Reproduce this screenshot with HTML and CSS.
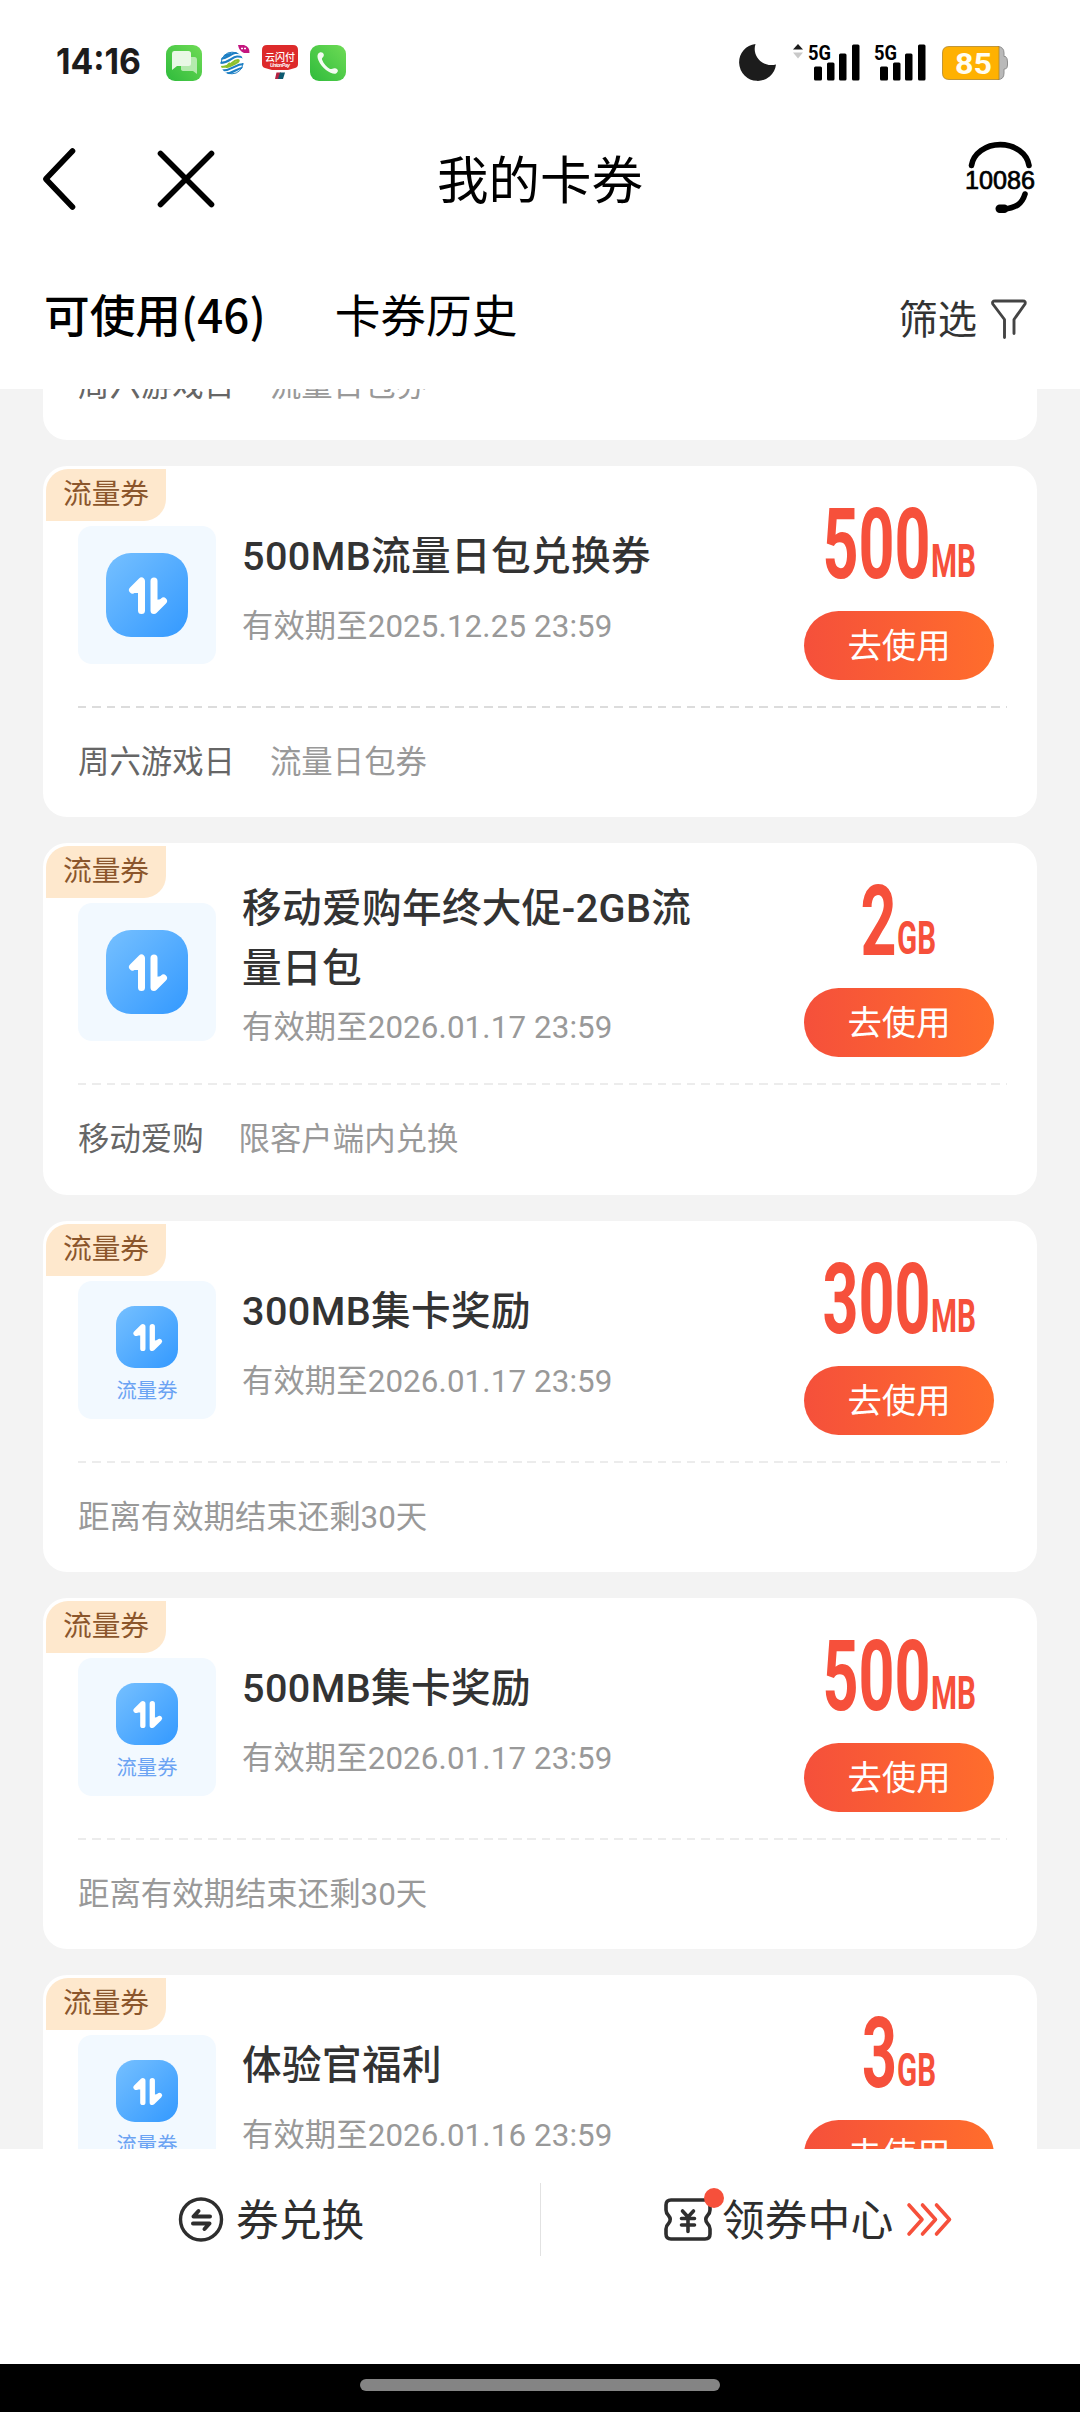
FILE: index.html
```html
<!DOCTYPE html>
<html lang="zh-CN">
<head>
<meta charset="utf-8">
<title>我的卡券</title>
<link rel="stylesheet" href="styles.css">
</head>
<body>
<svg class="defs" width="0" height="0">
  <defs>
    <linearGradient id="blue" x1="0" y1="0" x2="1" y2="1"><stop offset="0" stop-color="#76c0ff"/><stop offset="1" stop-color="#3399ff"/></linearGradient>
    <linearGradient id="green" x1="0" y1="1" x2="1" y2="0"><stop offset="0" stop-color="#2fbb3c"/><stop offset="1" stop-color="#6edb55"/></linearGradient>
    <clipPath id="globe"><circle cx="12" cy="18" r="11.500"/></clipPath>
    <symbol id="flow" viewBox="0 0 82 84">
      <rect width="82" height="84" rx="25" fill="url(#blue)"/>
      <path d="M26.500 37 35.500 28V57.500M48 28V57.500L57.500 48" fill="none" stroke="#fff" stroke-width="7" stroke-linecap="round" stroke-linejoin="round"/>
      <path d="M26.500 40 35.500 28V40ZM48 57 57.500 46 48 47Z" fill="#fff"/>
    </symbol>
    <symbol id="signal" viewBox="0 0 54 38" overflow="visible">
      <text x="0" y="15.500" class="net" textLength="23" lengthAdjust="spacingAndGlyphs">5G</text>
      <rect x="6" y="22.500" width="8" height="14" rx="1.500"/><rect x="19" y="18.500" width="7.500" height="18" rx="1.500"/><rect x="31" y="9.500" width="7.500" height="27" rx="1.500"/><rect x="44" y="0.500" width="7.500" height="36" rx="1.500"/>
    </symbol>
  </defs>
</svg>
<div class="screen">
  <div class="status">
    <div class="status-left">
      <svg width="86" height="38" viewBox="0 0 86 38"><text x="0" y="30" class="clock" textLength="85" lengthAdjust="spacingAndGlyphs">14:16</text></svg>
      <svg class="s-msg" width="36" height="36" viewBox="0 0 36 36"><rect width="36" height="36" rx="9" fill="url(#green)"/><path d="M15 12H28.500Q31 12 31 15V29L27 26H18Q15 26 15 24Z" fill="#b4eaae"/><path d="M8 6H22.500Q25 6 25 8.500V18.500Q25 21 22.500 21H11L6 25V8.500Q6 6 8 6Z" fill="#e9f8e6"/></svg>
      <svg class="s-cm" width="32" height="36" viewBox="0 0 32 36"><g clip-path="url(#globe)" fill="none" stroke-width="2.200"><path d="M-1 14C7 14 10 9 15 8 19 7.500 21 8 25 9M-1 18C10 18 11 12 17 11.500 20 11.300 22 12 25 13" stroke="#1d7fc4"/><path d="M-1 22C13 22 11 15.500 18 15 19 15 19 17 16 18 12 20 10 21.500 7 22 5 22 8 20.500 10 18" stroke="#8cc02c"/><path d="M1 25.500C13 26 14 19 24 19M4 29C14 29 16 23 24 22.500M11 9C8 9 6 10.500 4 11" stroke="#1d7fc4"/></g><circle cx="12" cy="18" r="10.800" fill="none" stroke="#1d7fc4" stroke-width="1" stroke-dasharray="22 12"/><path d="M18 0H24Q30 2 29.500 8H24Q19 6 18 0Z" fill="#c4157f"/><path d="M21 3.500H27" stroke="#fff" stroke-width="1.500" stroke-dasharray="2 1"/></svg>
      <svg class="s-up" width="36" height="36" viewBox="0 0 36 36"><path d="M5 0H31Q36 0 36 5V19Q36 22 33 23L26 25H10L3 23Q0 22 0 19V5Q0 0 5 0Z" fill="#dd2a2b"/><text x="3" y="15.500" class="up-cn" textLength="30">云闪付</text><text x="8" y="22" class="up-en" textLength="20">UnionPay</text><path d="M14.500 27.500H19L17 34H13Z" fill="#b52342"/><path d="M18 27.500H23L21 34H16Z" fill="#0c5a70"/></svg>
      <svg class="s-tel" width="36" height="36" viewBox="0 0 36 36"><rect width="36" height="36" rx="9" fill="url(#green)"/><path d="M8 9C9.500 6.500 13 6.500 13.800 9.500 14.300 12 11.500 12.500 12 14.500 13.500 18.500 16.500 22 20 24 22 24.500 23 22.500 26 23.500 29 25 28 27 26 28.500 22 30 12 24 8.500 15.500 7.500 13 7 11 8 9Z" fill="#f4fbf2"/></svg>
    </div>
    <div class="status-right">
      <svg width="38" height="38" viewBox="0 0 38 38"><path d="M16.500 0A18.500 18.500 0 1 0 37 20.500C24 24 12.500 12 16.500 0Z" fill="#1c1c1c"/></svg>
      <svg class="s-updn" width="10" height="38" viewBox="0 0 10 38"><path d="M0 5.500 5 0 10 5.500Z" fill="#1c1c1c"/><path d="M0 8.500H10L5 14.500Z" fill="#c9c9c9"/></svg>
      <svg class="s-sig1" width="54" height="38"><use href="#signal"/></svg>
      <svg class="s-sig2" width="54" height="38"><use href="#signal"/></svg>
      <svg class="s-bat" width="67" height="38" viewBox="0 0 67 38"><path d="M56 2.500Q62 3 62 9V12.500H63.500Q65.500 14 65.500 18V21Q65.500 24 63.500 25H62V29Q62 35.500 56 35.500Z" fill="#b9b9b9" stroke="#8d8d8d"/><path d="M57 2.500H7Q.500 2.500 .500 9V29Q.500 35.500 7 35.500H57Z" fill="#ffb101" stroke="#b08528" stroke-width=".8"/><text x="13" y="30" class="bat" textLength="37" lengthAdjust="spacingAndGlyphs">85</text></svg>
    </div>
  </div>

  <header class="nav">
    <svg width="34" height="62" viewBox="0 0 34 62"><path d="M29.500 3 2.800 31 29.500 59" class="ink"/></svg>
    <svg class="close" width="56" height="56" viewBox="0 0 56 56"><path d="M2.500 2.500 53.500 53.500M53.500 2.500 2.500 53.500" class="ink"/></svg>
    <h1>我的卡券</h1>
    <svg class="service" width="72" height="74" viewBox="0 0 72 74"><path d="M7.500 23.500A29 24 0 0 1 65 23.500" class="ink"/><path d="M61 52C58 62 52 66 40 67" class="ink"/><rect x="31.500" y="62.500" width="13" height="8.500" rx="4.200"/><text x="1" y="46.500" class="hotline" textLength="70" lengthAdjust="spacingAndGlyphs">10086</text></svg>
  </header>

  <nav class="tabs">
    <span class="tab on">可使用(46)</span>
    <span class="tab">卡券历史</span>
    <span class="filter">筛选<svg width="36" height="40" viewBox="0 0 36 40"><path d="M13.500 38.500V20.500L1.800 5Q.800 2 4 2H32Q35 2 34 5L23 20.500V34.500" fill="none" stroke="#444" stroke-width="2.900" stroke-linecap="round" stroke-linejoin="round"/></svg></span>
  </nav>

  <main class="scroll">
    <div class="list">
      <article class="card">
        <div class="card-main"></div>
        <div class="card-foot"><span class="src">周六游戏日</span><span>流量日包券</span></div>
      </article>

      <article class="card">
        <span class="tag">流量券</span>
        <div class="card-main">
          <div class="thumb"><svg width="82" height="84"><use href="#flow"/></svg></div>
          <div class="info"><h2>500MB流量日包兑换券</h2><p>有效期至2025.12.25 23:59</p></div>
          <div class="action">
            <svg class="amount" width="190" height="80"><text x="18.500" y="74.500" class="num" textLength="108" lengthAdjust="spacingAndGlyphs">500</text><text x="127" y="74" class="unit" textLength="45" lengthAdjust="spacingAndGlyphs">MB</text></svg>
            <button>去使用</button>
          </div>
        </div>
        <div class="card-foot strong"><span class="src">周六游戏日</span><span>流量日包券</span></div>
      </article>

      <article class="card">
        <span class="tag">流量券</span>
        <div class="card-main">
          <div class="thumb"><svg width="82" height="84"><use href="#flow"/></svg></div>
          <div class="info two"><h2>移动爱购年终大促-2GB流量日包</h2><p>有效期至2026.01.17 23:59</p></div>
          <div class="action">
            <svg class="amount" width="190" height="80"><text x="56.500" y="74.500" class="num" textLength="36" lengthAdjust="spacingAndGlyphs">2</text><text x="93" y="74" class="unit" textLength="39" lengthAdjust="spacingAndGlyphs">GB</text></svg>
            <button>去使用</button>
          </div>
        </div>
        <div class="card-foot"><span class="src">移动爱购</span><span>限客户端内兑换</span></div>
      </article>

      <article class="card">
        <span class="tag">流量券</span>
        <div class="card-main">
          <div class="thumb named"><svg width="62" height="62" viewBox="0 0 82 84" preserveAspectRatio="none"><use href="#flow"/></svg><small>流量券</small></div>
          <div class="info"><h2>300MB集卡奖励</h2><p>有效期至2026.01.17 23:59</p></div>
          <div class="action">
            <svg class="amount" width="190" height="80"><text x="18.500" y="74.500" class="num" textLength="108" lengthAdjust="spacingAndGlyphs">300</text><text x="127" y="74" class="unit" textLength="45" lengthAdjust="spacingAndGlyphs">MB</text></svg>
            <button>去使用</button>
          </div>
        </div>
        <div class="card-foot"><span>距离有效期结束还剩30天</span></div>
      </article>

      <article class="card">
        <span class="tag">流量券</span>
        <div class="card-main">
          <div class="thumb named"><svg width="62" height="62" viewBox="0 0 82 84" preserveAspectRatio="none"><use href="#flow"/></svg><small>流量券</small></div>
          <div class="info"><h2>500MB集卡奖励</h2><p>有效期至2026.01.17 23:59</p></div>
          <div class="action">
            <svg class="amount" width="190" height="80"><text x="18.500" y="74.500" class="num" textLength="108" lengthAdjust="spacingAndGlyphs">500</text><text x="127" y="74" class="unit" textLength="45" lengthAdjust="spacingAndGlyphs">MB</text></svg>
            <button>去使用</button>
          </div>
        </div>
        <div class="card-foot"><span>距离有效期结束还剩30天</span></div>
      </article>

      <article class="card">
        <span class="tag">流量券</span>
        <div class="card-main">
          <div class="thumb named"><svg width="62" height="62" viewBox="0 0 82 84" preserveAspectRatio="none"><use href="#flow"/></svg><small>流量券</small></div>
          <div class="info"><h2>体验官福利</h2><p>有效期至2026.01.16 23:59</p></div>
          <div class="action">
            <svg class="amount" width="190" height="80"><text x="58" y="74.500" class="num" textLength="35" lengthAdjust="spacingAndGlyphs">3</text><text x="93" y="74" class="unit" textLength="39" lengthAdjust="spacingAndGlyphs">GB</text></svg>
            <button>去使用</button>
          </div>
        </div>
      </article>
    </div>
  </main>

  <footer class="bar">
    <div class="bar-item left">
      <svg width="46" height="46" viewBox="0 0 46 46" fill="none" stroke="#2e2e2e" stroke-width="3.400" stroke-linecap="round" stroke-linejoin="round"><circle cx="23" cy="22.500" r="20.500"/><path d="M32 19.500H15.500L20.500 14M15 26.500H31.500L26.500 32" stroke-width="4"/></svg>
      <span>券兑换</span>
    </div>
    <div class="bar-item right">
      <span class="ticket"><svg width="50" height="46" viewBox="0 0 50 46" fill="none" stroke="#2e2e2e" stroke-width="3.600" stroke-linecap="round" stroke-linejoin="round"><path d="M8 3H42Q47 3 47 8V13Q47 16 44.500 18.500Q41 22.500 44.500 26.500Q47 29 47 32V37Q47 42 42 42H8Q3 42 3 37V32Q3 29 5.500 26.500Q9 22.500 5.500 18.500Q3 16 3 13V8Q3 3 8 3Z"/><path d="M19.500 14 25 20 30.500 14M18.500 21.500H31.500M18.500 28H31.500M25 21V34.500"/></svg><i class="dot"></i></span>
      <span>领券中心</span>
      <svg class="arrows" width="46" height="36" viewBox="0 0 46 36" fill="none" stroke="#f6503b" stroke-width="3.600" stroke-linecap="round" stroke-linejoin="round"><path d="M3 3 16 17.500 3 32M16.500 3 29.500 17.500 16.500 32M30.500 3 43.500 17.500 30.500 32"/></svg>
    </div>
  </footer>
  <div class="home"><i></i></div>
</div>
</body>
</html>
```
FILE: styles.css
```css
* { box-sizing: border-box; margin: 0; padding: 0; }
body { background: #fff; font-family: Roboto, "Noto Sans CJK SC", sans-serif; color: #333; }
svg { display: block; flex: none; overflow: visible; }
.defs { position: absolute; }
.screen { width: 1080px; height: 2412px; display: flex; flex-direction: column; overflow: hidden; }

.status { height: 125px; display: flex; justify-content: space-between; padding: 44px 71px 0 56px; }
.status-left, .status-right { display: flex; align-items: flex-start; }
.clock { font: 700 36px Inter, sans-serif; fill: #1c1c1c; }
.net { font: 700 21px Roboto, sans-serif; }
.bat { font: 700 29px Roboto, sans-serif; fill: #fffdf2; }
.up-cn { font: 500 10px "Noto Sans CJK SC", sans-serif; fill: #fff; }
.up-en { font: italic 700 5px "Liberation Sans", sans-serif; fill: #fff; }
.s-msg { margin: 1px 0 0 24px; }
.s-cm { margin: 1px 0 0 18px; }
.s-up { margin: 1px 0 0 10px; }
.s-tel { margin: 1px 0 0 12px; }
.s-updn { margin-left: 16px; }
.s-sig1 { margin-left: 5px; }
.s-sig2 { margin-left: 12px; }
.s-bat { margin-left: 14px; }

.nav { height: 115px; display: grid; grid-template-columns: 115px 168px 1fr 282px; align-items: center; padding: 0 44px 7px 43px; }
.nav h1 { padding-bottom: 5px; font: 400 51.500px/70px "Noto Sans CJK SC", sans-serif; color: #000; text-align: center; }
.nav .service { justify-self: end; }
.ink { fill: none; stroke: #000; stroke-width: 5.600; stroke-linecap: round; stroke-linejoin: round; }
.hotline { font: 400 25px "Liberation Sans", sans-serif; stroke: #000; stroke-width: .7; }

.tabs { height: 149px; display: flex; align-items: flex-start; padding: 38px 53px 0 44px; font-family: "Noto Sans CJK SC", sans-serif; color: #000; }
.tab { font-size: 45.700px; line-height: 70px; margin-right: 69px; }
.tab.on { font-weight: 500; }
.filter { margin-left: auto; display: flex; align-items: center; gap: 14px; font-size: 39.300px; line-height: 78px; color: #333; }
.filter svg { margin-top: 4px; }

.scroll { flex: none; height: 1760px; background: #f3f3f3; overflow: hidden; }
.list { margin-top: -300.250px; padding: 0 43px; display: flex; flex-direction: column; gap: 26px; }
.card { position: relative; flex: none; height: 351.250px; background: #fff; border-radius: 24px; }
.tag { position: absolute; left: 3px; top: 3px; width: 120px; height: 52px; padding-left: 17px; border-radius: 22px 0 22px 0; background: #fee8cd; color: #8b562c; font-size: 28.700px; line-height: 51px; }
.card-main { height: 240px; display: flex; padding: 0 43px 0 35px; }
.thumb { flex: none; width: 138px; height: 138px; margin-top: 60px; border-radius: 14px; background: #f2f9ff; display: flex; flex-direction: column; align-items: center; justify-content: center; }
.thumb.named { justify-content: flex-start; padding-top: 25px; }
.thumb small { margin-top: 8px; font-size: 20.300px; line-height: 30px; color: #6ba3f3; }
.info { width: 472px; margin: 61px 0 0 26px; }
.info.two { margin-top: 36px; }
.info h2 { font-size: 39.600px; font-weight: 500; line-height: 60px; letter-spacing: .4px; color: #333; }
.info p { margin-top: 20px; font-size: 31.300px; line-height: 40px; letter-spacing: .12px; color: #999; }
.info.two p { margin-top: 9px; }
.action { margin-left: auto; width: 190px; padding-top: 37px; }
.num { font: 700 98px Roboto, sans-serif; fill: #f6503b; }
.unit { font: 700 46px Roboto, sans-serif; fill: #f6503b; }
.action button { display: block; margin-top: 28px; width: 190px; height: 69px; padding-bottom: 5px; border: 0; border-radius: 35px; background: linear-gradient(90deg, #f5503b, #ff6d2c); color: #fff; font: 400 34.400px/60px "Noto Sans CJK SC", sans-serif; }
.card-foot { margin: 0 30px 0 35px; padding-top: 35px; display: flex; gap: 35px; font-size: 31.400px; line-height: 44px; color: #999; background: repeating-linear-gradient(90deg, #ececec 0 8.500px, transparent 8.500px 14.500px) 0 0 / 100% 2px no-repeat; }
.card-foot.strong { background-image: repeating-linear-gradient(90deg, #dcdcdc 0 8.500px, transparent 8.500px 14.500px); }
.src { color: #666; }

.bar { flex: none; height: 215px; display: grid; grid-template-columns: 541px 539px; padding-top: 34px; background: #fff; }
.bar-item { height: 73px; display: flex; align-items: center; font: 400 42.800px/60px "Noto Sans CJK SC", sans-serif; color: #2e2e2e; }
.bar-item > span:not(.ticket) { padding-bottom: 5px; }
.bar-item.left { border-right: 1px solid #e2e2e2; padding-left: 178px; gap: 12px; }
.bar-item.right { padding-left: 122px; gap: 9px; }
.ticket { position: relative; }
.dot { position: absolute; left: 41px; top: -9px; width: 20px; height: 20px; border-radius: 50%; background: #f6503b; }
.arrows { margin-left: 4px; }
.home { flex: none; height: 48px; background: #000; display: flex; justify-content: center; padding-top: 15px; }
.home i { width: 360px; height: 12px; border-radius: 6px; background: #848484; }
```
